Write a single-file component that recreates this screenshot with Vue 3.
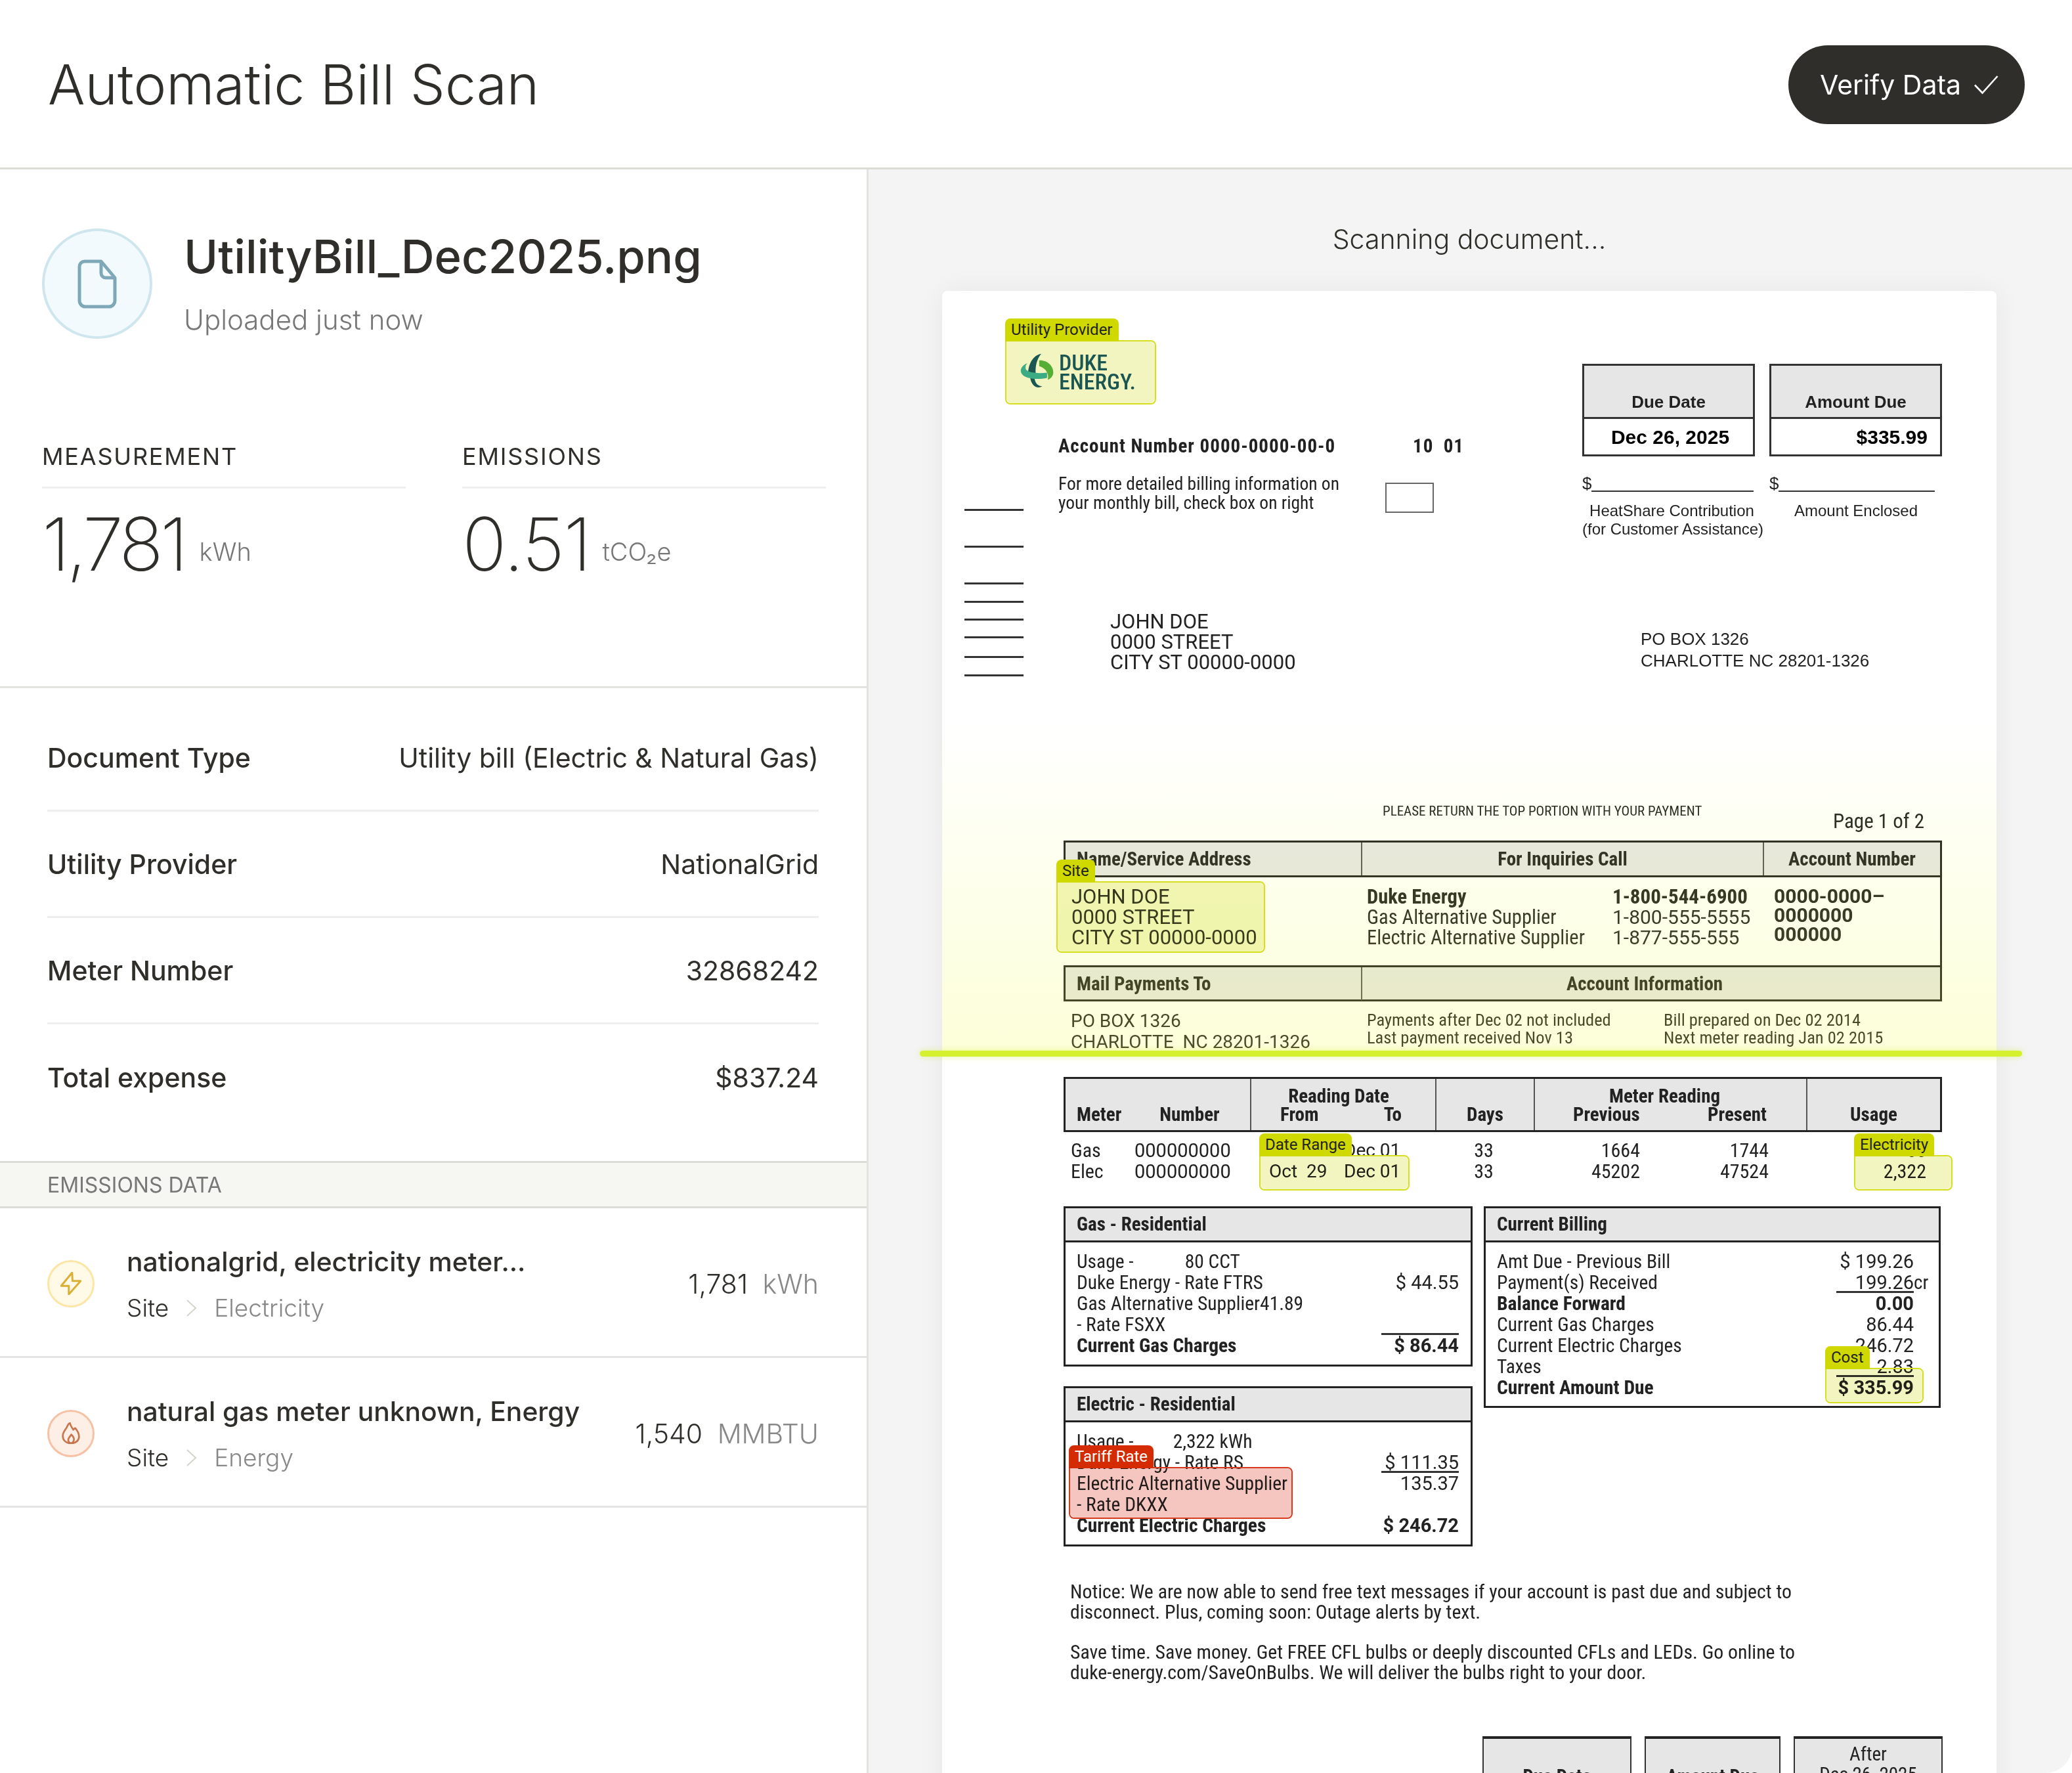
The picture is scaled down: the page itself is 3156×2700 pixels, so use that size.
<script setup>
const details = [
  { label: 'Document Type', value: 'Utility bill (Electric & Natural Gas)' },
  { label: 'Utility Provider', value: 'NationalGrid' },
  { label: 'Meter Number', value: '32868242' },
  { label: 'Total expense', value: '$837.24' }
];

const tickGaps = [332, 53, 53, 25, 24, 24, 27, 25];

// boxes drawn by the scanner, positions are relative to the bill sheet
const marks = [
  { label: 'Utility Provider', left: 96, top: 75, width: 230, height: 98, red: false },
  { label: 'Site', left: 174, top: 899, width: 318, height: 109, red: false },
  { label: 'Date Range', left: 483, top: 1316, width: 229, height: 54, red: false },
  { label: 'Electricity', left: 1389, top: 1316, width: 150, height: 54, red: false },
  { label: 'Cost', left: 1345, top: 1640, width: 150, height: 54, red: false },
  { label: 'Tariff Rate', left: 193, top: 1791, width: 341, height: 79, red: true }
];
</script>

<template>
  <div class="page">
    <header class="topbar">
      <h1>Automatic Bill Scan</h1>
      <button class="verify">
        Verify Data
        <svg width="37" height="30" viewBox="0 0 37 30" fill="none" stroke="#fff" stroke-width="2.6">
          <path d="M1 15.5 12.5 27.5 35.5 2" />
        </svg>
      </button>
    </header>

    <div class="main">
      <aside class="side">
        <div class="file">
          <div class="file-icon">
            <svg width="60" height="75" viewBox="0 0 60 75" fill="none" stroke="#7ea7b8" stroke-width="5" stroke-linejoin="round">
              <path d="M11 3H36L57 28V63a9 9 0 0 1-9 9H12a9 9 0 0 1-9-9V11a8 8 0 0 1 8-8Z" />
              <path d="M36 3V21a7 7 0 0 0 7 7H57" />
            </svg>
          </div>
          <div class="file-text">
            <div class="file-name">UtilityBill_Dec2025.png</div>
            <div class="file-time">Uploaded just now</div>
          </div>
        </div>

        <div class="stats">
          <div class="stat">
            <div class="stat-label">MEASUREMENT</div>
            <div class="stat-value">1,781<span>kWh</span></div>
          </div>
          <div class="stat">
            <div class="stat-label">EMISSIONS</div>
            <div class="stat-value">0.51<span>tCO₂e</span></div>
          </div>
        </div>

        <div class="details">
          <div v-for="row in details" :key="row.label" class="detail">
            <span class="detail-label">{{ row.label }}</span>
            <span class="detail-value">{{ row.value }}</span>
          </div>
        </div>

        <div class="emissions-head">EMISSIONS DATA</div>

        <div class="emission">
          <div class="dot dot-yellow">
            <svg width="32" height="35" viewBox="0 0 30 33" fill="none" stroke="#dbaf33" stroke-width="2.8" stroke-linejoin="round">
              <path d="M16.7 1 1 20H12V32L29 13H17.3Z" />
            </svg>
          </div>
          <div class="emission-text">
            <div class="emission-name">nationalgrid, electricity meter...</div>
            <div class="crumb">
              <span>Site</span>
              <svg width="17" height="26" viewBox="0 0 17 26" fill="none" stroke="#d4d4ca" stroke-width="2"><path d="M2 1 15 13 2 25" /></svg>
              <span class="crumb-last">Electricity</span>
            </div>
          </div>
          <div class="emission-amount">1,781 <span>kWh</span></div>
        </div>

        <div class="emission">
          <div class="dot dot-orange">
            <svg width="28" height="33" viewBox="0 0 27 32" fill="none" stroke="#c6774d" stroke-width="2.6" stroke-linejoin="round">
              <path d="M13.5 31C6 31 1.5 26 1.5 20 1.5 14 6 11 8 6 9 3.500 10.500 1.500 12 1c1 4 3 7 5 10 1-1.500 2-2 3-2.500 3 3.500 5.500 7.500 5.500 12.500 0 6-5 10-12 10Z" />
              <path d="M13.5 31C10 30 9 27 10 24c1-2 3-4 4-6 2 2 4 4.500 4 7 0 3-1.500 5-4.500 6Z" />
            </svg>
          </div>
          <div class="emission-text">
            <div class="emission-name">natural gas meter unknown, Energy</div>
            <div class="crumb">
              <span>Site</span>
              <svg width="17" height="26" viewBox="0 0 17 26" fill="none" stroke="#d4d4ca" stroke-width="2"><path d="M2 1 15 13 2 25" /></svg>
              <span class="crumb-last">Energy</span>
            </div>
          </div>
          <div class="emission-amount">1,540 <span>MMBTU</span></div>
        </div>
      </aside>

      <section class="viewer">
        <div class="scanning">Scanning document...</div>

        <div class="sheet">
          <div class="remit">
            <div class="ticks">
              <i v-for="(gap, i) in tickGaps" :key="i" :style="{ marginTop: gap + 'px' }"></i>
            </div>

            <div class="remit-left">
              <div class="logo">
                <svg width="52" height="57" viewBox="40 40 155 170">
                  <path fill="#1b5a6e" d="M135 42C100 48 78 85 76 128l34 4c-2-35 5-65 25-90Z" />
                  <path fill="#1b5a6e" d="M85 150c5 35 30 55 55 40-20 0-32-15-35-35Z" />
                  <path fill="#5bb547" d="M126 72c36-2 66 25 64 58-2 15-13 26-25 30 6-20-2-50-39-62Z" />
                  <path fill="#3fb3b0" d="M72 85C48 95 36 115 46 132c14 24 66 30 116 20v-24c-45 5-84 0-96-14-4-10-2-20 6-29Z" />
                </svg>
                <div class="logo-text">DUKE<br />ENERGY<span>.</span></div>
              </div>
              <div class="account-line"><b>Account Number 0000-0000-00-0</b><b>10&nbsp;&nbsp;01</b></div>
              <div class="check-line">
                <p>For more detailed billing information on<br />your monthly bill, check box on right</p>
                <div class="check"></div>
              </div>
              <p class="addressee caps">JOHN DOE<br />0000 STREET<br />CITY ST 00000-0000</p>
            </div>

            <div class="remit-right">
              <div class="due-row">
                <div class="due">
                  <div class="due-head">Due Date</div>
                  <div class="due-val due-center">Dec 26, 2025</div>
                </div>
                <div class="due">
                  <div class="due-head">Amount Due</div>
                  <div class="due-val due-end">$335.99</div>
                </div>
              </div>
              <div class="fill-row">
                <div class="fill"><div class="fill-line">$<i></i></div><p>HeatShare Contribution<br />(for Customer Assistance)</p></div>
                <div class="fill"><div class="fill-line">$<i></i></div><p>Amount Enclosed</p></div>
              </div>
              <p class="pobox">PO BOX 1326<br />CHARLOTTE NC 28201-1326</p>
            </div>
          </div>

          <div class="return-row">
            <span class="return-note">PLEASE RETURN THE TOP PORTION WITH YOUR PAYMENT</span>
            <span class="page-no">Page 1 of 2</span>
          </div>

          <div class="block">
            <div class="bar bar-account">
              <b class="bar-left">Name/Service Address</b>
              <b>For Inquiries Call</b>
              <b>Account Number</b>
            </div>
            <div class="account-body">
              <p class="caps">JOHN DOE<br />0000 STREET<br />CITY ST 00000-0000</p>
              <div class="inquiries">
                <p><b>Duke Energy</b><br />Gas Alternative Supplier<br />Electric Alternative Supplier</p>
                <p class="phones"><b>1-800-544-6900</b><br />1-800-555-5555<br />1-877-555-555</p>
              </div>
              <p class="acct-no"><b>0000-0000–<br />0000000<br />000000</b></p>
            </div>
            <div class="bar bar-mail">
              <b class="bar-left">Mail Payments To</b>
              <b>Account Information</b>
            </div>
            <div class="info">
              <p class="info-addr">PO BOX 1326<br />CHARLOTTE&nbsp;&nbsp;NC 28201-1326</p>
              <p>Payments after Dec 02 not included<br />Last payment received Nov 13</p>
              <p>Bill prepared on Dec 02 2014<br />Next meter reading Jan 02 2015</p>
            </div>
          </div>

          <div class="block meter-block">
            <div class="meter-head">
              <div class="mh mh-meter"><b>Meter</b><b>Number</b></div>
              <div class="mh mh-split">
                <b class="mh-title mh-title-date">Reading Date</b>
                <div class="mh-pair mh-dates"><b>From</b><b>To</b></div>
              </div>
              <div class="mh mh-center"><b>Days</b></div>
              <div class="mh mh-split">
                <b class="mh-title mh-title-read">Meter Reading</b>
                <div class="mh-pair mh-reads"><b>Previous</b><b>Present</b></div>
              </div>
              <div class="mh mh-center"><b>Usage</b></div>
            </div>
            <div class="meter-row">
              <span>Gas</span><span class="wide">000000000</span><span class="date">Oct&nbsp;&nbsp;29</span><span class="date">Dec 01</span>
              <span class="c">33</span><span class="r">1664</span><span class="r">1744</span><span class="r">80</span>
            </div>
            <div class="meter-row">
              <span>Elec</span><span class="wide">000000000</span><span class="date">Oct&nbsp;&nbsp;29</span><span class="date">Dec 01</span>
              <span class="c">33</span><span class="r">45202</span><span class="r">47524</span><span class="r">2,322</span>
            </div>
          </div>

          <div class="block charges">
            <div class="charges-left">
              <div class="box">
                <b class="box-head">Gas - Residential</b>
                <div class="box-body">
                  <div class="line"><span>Usage -<em class="gap-gas">80 CCT</em></span></div>
                  <div class="line"><span>Duke Energy - Rate FTRS</span><span>$ 44.55</span></div>
                  <div class="line"><span>Gas Alternative Supplier41.89</span></div>
                  <div class="line"><span>- Rate FSXX</span></div>
                  <div class="line"><b>Current Gas Charges</b><b class="sum">$ 86.44</b></div>
                </div>
              </div>
              <div class="box">
                <b class="box-head">Electric - Residential</b>
                <div class="box-body">
                  <div class="line"><span>Usage -<em class="gap-elec">2,322 kWh</em></span></div>
                  <div class="line"><span>Duke Energy - Rate RS</span><span class="under">$ 111.35</span></div>
                  <div class="line"><span>Electric Alternative Supplier</span><span>135.37</span></div>
                  <div class="line"><span>- Rate DKXX</span></div>
                  <div class="line"><b>Current Electric Charges</b><b>$ 246.72</b></div>
                </div>
              </div>
            </div>
            <div class="box box-billing">
              <b class="box-head">Current Billing</b>
              <div class="box-body">
                <div class="line"><span>Amt Due - Previous Bill</span><span>$ 199.26</span></div>
                <div class="line"><span>Payment(s) Received</span><span class="under">199.26<i class="cr">cr</i></span></div>
                <div class="line"><b>Balance Forward</b><b>0.00</b></div>
                <div class="line"><span>Current Gas Charges</span><span>86.44</span></div>
                <div class="line"><span>Current Electric Charges</span><span>246.72</span></div>
                <div class="line"><span>Taxes</span><span>2.83</span></div>
                <div class="line"><b>Current Amount Due</b><b class="sum">$ 335.99</b></div>
              </div>
            </div>
          </div>

          <div class="block notice">
            <p>Notice: We are now able to send free text messages if your account is past due and subject to<br />disconnect. Plus, coming soon: Outage alerts by text.</p>
            <p>Save time. Save money. Get FREE CFL bulbs or deeply discounted CFLs and LEDs. Go online to<br />duke-energy.com/SaveOnBulbs. We will deliver the bulbs right to your door.</p>
          </div>

          <div class="stubs">
            <div class="stub stub-a"><b>Due Date</b></div>
            <div class="stub stub-b"><b>Amount Due</b></div>
            <div class="stub stub-a"><span>After</span><span>Dec 26, 2025</span></div>
          </div>

          <div class="scan-glow"></div>
          <div class="scan-line"></div>

          <div
            v-for="mark in marks"
            :key="mark.label"
            class="mark"
            :class="{ 'mark-red': mark.red }"
            :style="{ left: mark.left + 'px', top: mark.top + 'px', width: mark.width + 'px', height: mark.height + 'px' }"
          >
            <span class="mark-tag">{{ mark.label }}</span>
          </div>
        </div>
      </section>
    </div>
  </div>
</template>

<style>
html, body {
  margin: 0;
  background: #fff;
}
</style>

<style scoped>
.page {
  width: 3156px;
  height: 2700px;
  overflow: hidden;
  background: #fff;
  border-bottom-right-radius: 40px;
  font-family: Inter, "Liberation Sans", sans-serif;
  color: #2f2e2a;
}

p {
  margin: 0;
}

.topbar {
  height: 258px;
  box-sizing: border-box;
  border-bottom: 3px solid #dcdcd6;
  padding: 2px 72px 0 73px;
  display: flex;
  align-items: center;
  justify-content: space-between;
}

.topbar h1 {
  margin: 0;
  font-size: 84px;
  font-weight: 300;
}

.verify {
  height: 120px;
  width: 360px;
  padding: 0 0 0 8px;
  border: none;
  border-radius: 60px;
  background: #2f2e2a;
  color: #fff;
  font-family: inherit;
  font-size: 41px;
  font-weight: 400;
  display: flex;
  align-items: center;
  justify-content: center;
  gap: 20px;
}

.main {
  display: grid;
  grid-template-columns: 1323px 1fr;
  height: 2442px;
}

.side {
  border-right: 3px solid #e3e3df;
}

.file {
  display: flex;
  align-items: center;
  gap: 48px;
  padding: 90px 64px 0;
}

.file-icon {
  width: 168px;
  height: 168px;
  box-sizing: border-box;
  border: 4px solid #d0e6ee;
  border-radius: 50%;
  background: #f3fafd;
  display: flex;
  align-items: center;
  justify-content: center;
}

.file-text {
  margin-top: -5px;
}

.file-name {
  font-size: 70.5px;
  font-weight: 500;
  line-height: 88px;
}

.file-time {
  margin-top: 26px;
  font-size: 42px;
  font-weight: 300;
  color: #777;
}

.stats {
  display: grid;
  grid-template-columns: 554px 554px;
  gap: 86px;
  padding: 155px 64px 0;
  height: 532px;
  box-sizing: border-box;
  border-bottom: 3px solid #e3e3df;
}

.stat-label {
  font-size: 36px;
  letter-spacing: 1.8px;
  line-height: 48px;
  padding-bottom: 22px;
  border-bottom: 3px solid #eee;
}

.stat-value {
  margin-top: 7px;
  display: flex;
  align-items: center;
  gap: 22px;
  font-size: 112px;
  font-weight: 250;
  letter-spacing: -5px;
  line-height: 130px;
}

.stat + .stat .stat-value {
  gap: 18px;
  letter-spacing: -1.5px;
}

.stat-value span {
  margin-top: 24px;
  font-size: 38px;
  font-weight: 300;
  letter-spacing: 0;
  color: #777;
}

.details {
  padding: 26px 73px 0 72px;
}

.detail {
  height: 162px;
  box-sizing: border-box;
  display: flex;
  align-items: center;
  justify-content: space-between;
  border-bottom: 3px solid #eee;
  font-size: 41px;
}

.detail:last-child {
  border-bottom: none;
}

.detail-label {
  font-weight: 500;
}

.emissions-head {
  margin-top: 46px;
  height: 72px;
  box-sizing: border-box;
  padding-left: 72px;
  display: flex;
  align-items: center;
  background: #f6f6f2;
  border-top: 3px solid #dcdcd6;
  border-bottom: 3px solid #dcdcd6;
  font-size: 32px;
  color: #777;
}

.emission {
  height: 228px;
  box-sizing: border-box;
  padding: 4px 73px 0 72px;
  display: flex;
  align-items: center;
  border-bottom: 3px solid #e4e4e4;
}

.dot {
  width: 72px;
  height: 72px;
  flex: none;
  box-sizing: border-box;
  border-radius: 50%;
  border: 3px solid;
  display: flex;
  align-items: center;
  justify-content: center;
}

.dot-yellow {
  background: #fff9e8;
  border-color: #fbe6a6;
}

.dot-orange {
  background: #fdeee6;
  border-color: #f6c2a6;
}

.emission-text {
  flex: 1;
  margin-left: 49px;
}

.emission-name {
  font-size: 40.8px;
  font-weight: 500;
  line-height: 56px;
}

.crumb {
  margin-top: 18px;
  display: flex;
  align-items: center;
  gap: 26px;
  font-size: 37px;
  font-weight: 300;
  line-height: 50px;
}

.crumb-last {
  color: #888;
}

.emission-amount {
  font-size: 41px;
  font-weight: 300;
  word-spacing: 11px;
}

.emission-amount span {
  color: #888;
}

/* right side */
.viewer {
  background: #f4f4f4;
  padding-right: 3px;
  display: flex;
  flex-direction: column;
  align-items: center;
}

.scanning {
  margin-top: 77px;
  height: 58px;
  line-height: 58px;
  font-size: 41px;
  font-weight: 300;
  margin-bottom: 50px;
}

.sheet {
  position: relative;
  flex: none;
  width: 1606px;
  height: 2400px;
  background: #fff;
  border-radius: 8px;
  box-shadow: 0 0 40px rgba(0, 0, 0, 0.06);
  font-family: Roboto, "Liberation Sans", sans-serif;
  font-stretch: 75%;
  font-size: 29px;
  line-height: 31px;
  color: #222;
}

/* all-caps and digit runs in the scan are wider than the words around them */
.caps {
  font-size: 31px;
  font-stretch: 88%;
}

.remit {
  height: 767px;
  display: flex;
  padding-left: 34px;
}

.ticks {
  width: 90px;
  flex: none;
  display: flex;
  flex-direction: column;
}

.ticks i {
  display: block;
  height: 3px;
  background: #333;
}

.remit-left {
  width: 798px;
  margin-left: 53px;
}

.logo {
  display: flex;
  gap: 7px;
  margin: 95px 0 0 -58px;
  height: 57px;
}

.logo-text {
  font-size: 34px;
  line-height: 29px;
  font-weight: 500;
  color: #1b5a6e;
}

.account-line {
  margin-top: 69px;
  display: flex;
  letter-spacing: 1px;
}

.account-line b:first-child {
  width: 540px;
}

.check-line {
  margin-top: 27px;
  display: flex;
  font-size: 27.5px;
  line-height: 29px;
}

.check-line p {
  width: 498px;
}

.check {
  width: 70px;
  height: 42px;
  margin-top: 13px;
  border: 2px solid #666;
}

.addressee {
  margin: 150px 0 0 79px;
}

.remit-right {
  width: 549px;
  padding-top: 111px;
  font-family: "Liberation Sans", sans-serif;
}

.due-row {
  display: flex;
  gap: 22px;
}

.due {
  width: 263px;
  height: 141px;
  box-sizing: border-box;
  border: 3px solid #333;
}

.due-head {
  height: 81px;
  box-sizing: border-box;
  padding-top: 40px;
  background: #e6e6e6;
  border-bottom: 3px solid #333;
  text-align: center;
  font-size: 26px;
  font-weight: 700;
}

.due-val {
  font-size: 30px;
  font-weight: 700;
  line-height: 56px;
  color: #000;
}

.due-center {
  text-align: center;
  padding-left: 5px;
}

.due-end {
  text-align: right;
  padding-right: 19px;
}

.fill-row {
  margin-top: 27px;
  display: flex;
  gap: 12px;
}

.fill {
  width: 273px;
  font-size: 24px;
  line-height: 28px;
  text-align: center;
  white-space: nowrap;
}

.fill-line {
  display: flex;
  align-items: flex-end;
  text-align: left;
  font-size: 26px;
  margin-bottom: 14px;
}

.fill-line i {
  flex: 1;
  height: 2px;
  margin: 0 12px 1px 0;
  background: #333;
}

.pobox {
  margin: 137px 0 0 89px;
  font-size: 26px;
  line-height: 33px;
}

.return-row {
  height: 70px;
  display: flex;
  justify-content: space-between;
  margin: 0 110px 0 671px;
}

.return-note {
  font-size: 21px;
  line-height: 50px;
}

.page-no {
  font-size: 31px;
  line-height: 82px;
}

.block {
  margin-left: 185px;
  width: 1338px;
}

.bar {
  box-sizing: border-box;
  display: grid;
  background: #e6e6e6;
  border: 3px solid #222;
  align-items: center;
  text-align: center;
}

.bar-account {
  height: 56px;
  grid-template-columns: 450px 612px 1fr;
}

.bar-account b + b,
.bar-mail b + b {
  height: 100%;
  line-height: 50px;
  border-left: 2px solid #555;
}

.bar-mail {
  height: 55px;
  grid-template-columns: 450px 1fr;
}

.bar-mail b + b {
  padding-right: 20px;
}

.bar-left {
  text-align: left;
  padding-left: 17px;
}

.account-body {
  height: 134px;
  box-sizing: border-box;
  padding-top: 14px;
  display: grid;
  grid-template-columns: 453px 612px 1fr;
  border-right: 3px solid #222;
  font-size: 30.5px;
}

.account-body > p:first-child {
  padding-left: 12px;
}

.inquiries {
  display: flex;
  padding-left: 9px;
}

.inquiries p:first-child {
  width: 374px;
}

.phones {
  font-size: 30px;
  font-stretch: 88%;
}

.phones b {
  font-stretch: 75%;
  font-size: 31px;
}

.acct-no {
  padding-left: 17px;
  font-size: 30px;
  font-stretch: 88%;
  line-height: 29px;
}

.info {
  display: grid;
  grid-template-columns: 451px 452px 1fr;
  padding: 14px 0 0 11px;
  height: 115px;
  box-sizing: border-box;
  font-size: 26.5px;
  line-height: 27px;
}

.info-addr {
  font-size: 28px;
  font-stretch: 88%;
  line-height: 32px;
}

.meter-head {
  height: 84px;
  box-sizing: border-box;
  display: grid;
  grid-template-columns: 281px 282px 150px 415px 1fr;
  background: #e6e6e6;
  border: 3px solid #222;
  line-height: 28px;
}

.mh {
  display: flex;
  align-items: flex-end;
  padding-bottom: 10px;
}

.mh + .mh {
  border-left: 2px solid #555;
}

.mh-meter {
  gap: 58px;
  padding-left: 17px;
}

.mh-center {
  justify-content: center;
}

.mh-split {
  flex-direction: column;
  align-items: stretch;
  justify-content: flex-end;
}

.mh-title {
  text-align: center;
}

.mh-title-date {
  padding-right: 14px;
}

.mh-title-read {
  padding-right: 18px;
}

.mh-pair {
  display: flex;
  justify-content: space-between;
}

.mh-dates {
  padding: 0 51px 0 44px;
}

.mh-reads {
  padding: 0 60px 0 58px;
}

.meter-row {
  display: grid;
  grid-template-columns: 97px 205px 114px 113px 200px 138px 196px 240px;
  padding-left: 11px;
  font-size: 30px;
  line-height: 32px;
}

.meter-row .wide {
  font-size: 29px;
  font-stretch: 88%;
}

.meter-row .date {
  font-size: 28px;
  font-stretch: 88%;
}

.meter-row:nth-child(2) {
  margin-top: 12px;
}

.meter-row .c {
  text-align: center;
}

.meter-row .r {
  text-align: right;
}

.meter-block {
  height: 197px;
}

.charges {
  display: flex;
  gap: 17px;
}

.charges-left {
  width: 623px;
  display: flex;
  flex-direction: column;
  gap: 30px;
}

.box {
  box-sizing: border-box;
  border: 3px solid #222;
  height: 244px;
}

.box-billing {
  width: 696px;
  height: 307px;
}

.box-head {
  display: block;
  height: 52px;
  box-sizing: border-box;
  padding-left: 17px;
  line-height: 48px;
  background: #e6e6e6;
  border-bottom: 3px solid #222;
}

.box-body {
  padding: 13px 18px 0 17px;
}

.box-billing .box-body {
  padding-right: 38px;
}

.line {
  height: 32px;
  line-height: 32px;
  display: flex;
  justify-content: space-between;
  font-size: 29.5px;
}

.line > span + span,
.line > b + b {
  font-size: 29px;
  font-stretch: 88%;
}

.line em {
  font-style: normal;
}

.gap-gas {
  margin-left: 78px;
}

.gap-elec {
  margin-left: 60px;
}

.sum,
.under {
  position: relative;
  display: block;
  width: 118px;
  text-align: right;
}

.sum::before {
  content: "";
  position: absolute;
  left: 0;
  right: 0;
  top: -3px;
  height: 3px;
  background: #333;
}

.under::after {
  content: "";
  position: absolute;
  left: 0;
  right: 0;
  bottom: 0;
  height: 3px;
  background: #333;
}

.cr {
  position: absolute;
  left: 100%;
  font-style: normal;
  font-stretch: 75%;
}

.notice {
  margin-top: 53px;
  padding-left: 10px;
  box-sizing: border-box;
  font-size: 29.8px;
  line-height: 31px;
}

.notice p + p {
  margin-top: 30px;
}

.stubs {
  margin: 82px 0 0 823px;
  display: flex;
  gap: 20px;
}

.stub {
  height: 120px;
  box-sizing: border-box;
  background: #e6e6e6;
  border: 2px solid #333;
  border-top: 4px solid #222;
  display: flex;
  flex-direction: column;
  align-items: center;
  padding-top: 8px;
}

.stub-a {
  width: 227px;
}

.stub-b {
  width: 207px;
}

.stub b {
  margin-top: 34px;
}

.scan-glow {
  position: absolute;
  left: 0;
  right: 0;
  top: 657px;
  height: 506px;
  background: linear-gradient(to bottom, rgba(240, 255, 60, 0), rgba(240, 255, 60, 0.2));
}

.scan-line {
  position: absolute;
  left: -34px;
  right: -39px;
  top: 1157px;
  height: 9px;
  border-radius: 5px;
  background: #d4f02f;
  box-shadow: 0 0 8px rgba(212, 240, 47, 0.5);
}

.mark {
  position: absolute;
  box-sizing: border-box;
  border: 2px solid #d6de22;
  border-radius: 0 8px 8px 8px;
}

.mark::before {
  content: "";
  position: absolute;
  inset: 0;
  border-radius: inherit;
  background: #f2f5bf;
  mix-blend-mode: multiply;
}

.mark-tag {
  position: absolute;
  left: -2px;
  bottom: 100%;
  height: 35px;
  padding: 0 9px;
  border-radius: 8px 8px 0 0;
  background: #cfd900;
  font-family: Roboto, sans-serif;
  font-stretch: 100%;
  font-size: 24px;
  line-height: 35px;
  white-space: nowrap;
  color: #222;
}

.mark-red {
  border-color: #d63a1f;
}

.mark-red::before {
  background: #f5c6c0;
}

.mark-red .mark-tag {
  background: #d42b00;
  color: #fff;
}
</style>
